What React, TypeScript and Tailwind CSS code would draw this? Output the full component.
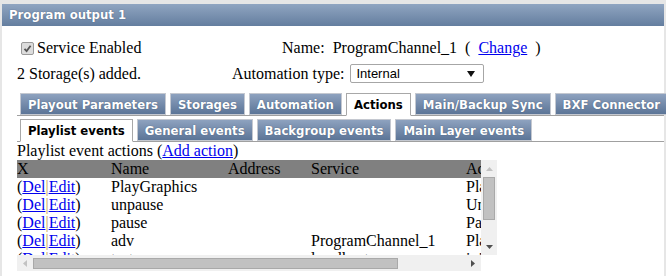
import React from 'react';

const mainTabs = [
  { label: 'Playout Parameters', active: false },
  { label: 'Storages', active: false },
  { label: 'Automation', active: false },
  { label: 'Actions', active: true },
  { label: 'Main/Backup Sync', active: false },
  { label: 'BXF Connector', active: false },
];

const eventTabs = [
  { label: 'Playlist events', active: true },
  { label: 'General events', active: false },
  { label: 'Backgroup events', active: false },
  { label: 'Main Layer events', active: false },
];

const actions = [
  { name: 'PlayGraphics', address: '', service: '', action: 'PlayGraphics' },
  { name: 'unpause', address: '', service: '', action: 'Unpause' },
  { name: 'pause', address: '', service: '', action: 'Pause' },
  { name: 'adv', address: '', service: 'ProgramChannel_1', action: 'PlayNext' },
  { name: 'test', address: '', service: 'localhost', action: 'init' },
];

function Tab({ label, active }: { label: string; active: boolean }) {
  return (
    <div
      className={`px-[7px] flex items-center border whitespace-nowrap text-[13px] font-bold leading-none ${
        active
          ? 'bg-white text-black border-[#a8a8a8] border-b-white -mb-px h-[23px]'
          : 'h-[22px] bg-gradient-to-b from-[#8ea2bf] to-[#5c7597] text-white border-[#c4c8d0] [text-shadow:0_0_1px_#3b4f6b]'
      }`}
    >
      {label}
    </div>
  );
}

function TabRow({ tabs }: { tabs: { label: string; active: boolean }[] }) {
  return (
    <div className="flex items-end gap-[4px] pl-[3px] border-b border-[#a0a0a0]">
      {tabs.map(t => (
        <Tab key={t.label} label={t.label} active={t.active} />
      ))}
    </div>
  );
}

function DelEdit() {
  return (
    <span>
      (<a className="text-[#0000ee] underline">Del</a>
      <span className="text-[#c9a24a]">|</span>
      <a className="text-[#0000ee] underline">Edit</a>)
    </span>
  );
}

export default function App() {
  return (
    <div className="w-[666px] h-[276px] overflow-hidden bg-[#e6e6e6] pt-[4px] pl-[2px] pr-[2px] font-['Liberation_Serif',serif] text-[16px] text-black">
      <div className="bg-white h-full">
        <div className="h-[22px] bg-gradient-to-b from-[#90a5c1] to-[#647e9f] flex items-center pl-[7px] text-white text-[13px] font-bold font-['DejaVu_Sans_Condensed','DejaVu_Sans',sans-serif] [text-shadow:0_0_1px_#3a4e6a]">
          Program output 1
        </div>

        <div className="pl-[15px] pt-[13px]">
          <div className="flex items-center h-[18px] leading-[18px]">
            <div className="w-[265px] flex items-center pl-[4px]">
              <span className="w-[13px] h-[13px] bg-[#dcdcdc] border border-[#9a9a9a] rounded-[2px] flex items-center justify-center">
                <svg width="9" height="9" viewBox="0 0 9 9">
                  <path d="M1.5 4.8 L3.6 7 L7.6 1.8" stroke="#555" strokeWidth="1.8" fill="none" />
                </svg>
              </span>
              <span className="ml-[3px]">Service Enabled</span>
            </div>
            <span>Name:&nbsp; ProgramChannel_1&nbsp; (&nbsp; <a className="text-[#0000ee] underline">Change</a>&nbsp; )</span>
          </div>

          <div className="flex items-center h-[19px] mt-[7px]">
            <span className="w-[215px]">2 Storage(s) added.</span>
            <span>Automation type:</span>
            <div className="ml-[6px] w-[134px] h-[19px] border border-[#a6a6a6] rounded-[2px] flex items-center justify-between pl-[5px] pr-[8px] font-['Liberation_Sans',sans-serif] text-[13px]">
              <span>Internal</span>
              <svg width="8" height="6" viewBox="0 0 8 6">
                <path d="M0 0 H8 L4 6 Z" fill="#111" />
              </svg>
            </div>
          </div>

          <div className="mt-[10px] font-['DejaVu_Sans_Condensed','DejaVu_Sans',sans-serif]">
            <TabRow tabs={mainTabs} />
            <div className="mt-[3px]">
              <TabRow tabs={eventTabs} />
            </div>
          </div>

          <div className="leading-[18px]">
            Playlist event actions (<a className="text-[#0000ee] underline">Add action</a>)
          </div>

          <div className="w-[480px] flex flex-col">
            <div className="flex h-[95px]">
              <div className="w-[464px] overflow-hidden">
                <div className="w-[620px] leading-[18px]">
                  <div className="flex bg-[#808080] h-[18px]">
                    <div className="w-[94px]">X</div>
                    <div className="w-[117px]">Name</div>
                    <div className="w-[83px]">Address</div>
                    <div className="w-[155px]">Service</div>
                    <div className="w-[150px]">Action</div>
                  </div>
                  {actions.map((a, i) => (
                    <div key={i} className="flex h-[18px] whitespace-nowrap">
                      <div className="w-[94px]"><DelEdit /></div>
                      <div className="w-[117px]">{a.name}</div>
                      <div className="w-[83px]">{a.address}</div>
                      <div className="w-[155px]">{a.service}</div>
                      <div className="w-[150px]">{a.action}</div>
                    </div>
                  ))}
                </div>
              </div>
              <div className="w-[16px] bg-[#f0f0f0] flex flex-col items-center">
                <div className="h-[17px] flex items-center justify-center">
                  <svg width="7" height="4" viewBox="0 0 7 4"><path d="M0 4 L3.5 0 L7 4 Z" fill="#c2c2c2" /></svg>
                </div>
                <div className="w-[12px] h-[43px] bg-[#c1c1c1] border border-[#a9a9a9]" />
                <div className="flex-1" />
                <div className="h-[17px] flex items-center justify-center">
                  <svg width="7" height="4" viewBox="0 0 7 4"><path d="M0 0 L7 0 L3.5 4 Z" fill="#505050" /></svg>
                </div>
              </div>
            </div>
            <div className="flex h-[16px]">
              <div className="w-[464px] bg-[#f0f0f0] flex items-center">
                <div className="w-[16px] flex items-center justify-center">
                  <svg width="4" height="7" viewBox="0 0 4 7"><path d="M4 0 L0 3.5 L4 7 Z" fill="#c2c2c2" /></svg>
                </div>
                <div className="w-[365px] h-[11px] bg-[#c1c1c1] border border-[#a9a9a9]" />
                <div className="flex-1" />
                <div className="w-[16px] flex items-center justify-center">
                  <svg width="4" height="7" viewBox="0 0 4 7"><path d="M0 0 L4 3.5 L0 7 Z" fill="#505050" /></svg>
                </div>
              </div>
            </div>
          </div>
        </div>
      </div>
    </div>
  );
}
